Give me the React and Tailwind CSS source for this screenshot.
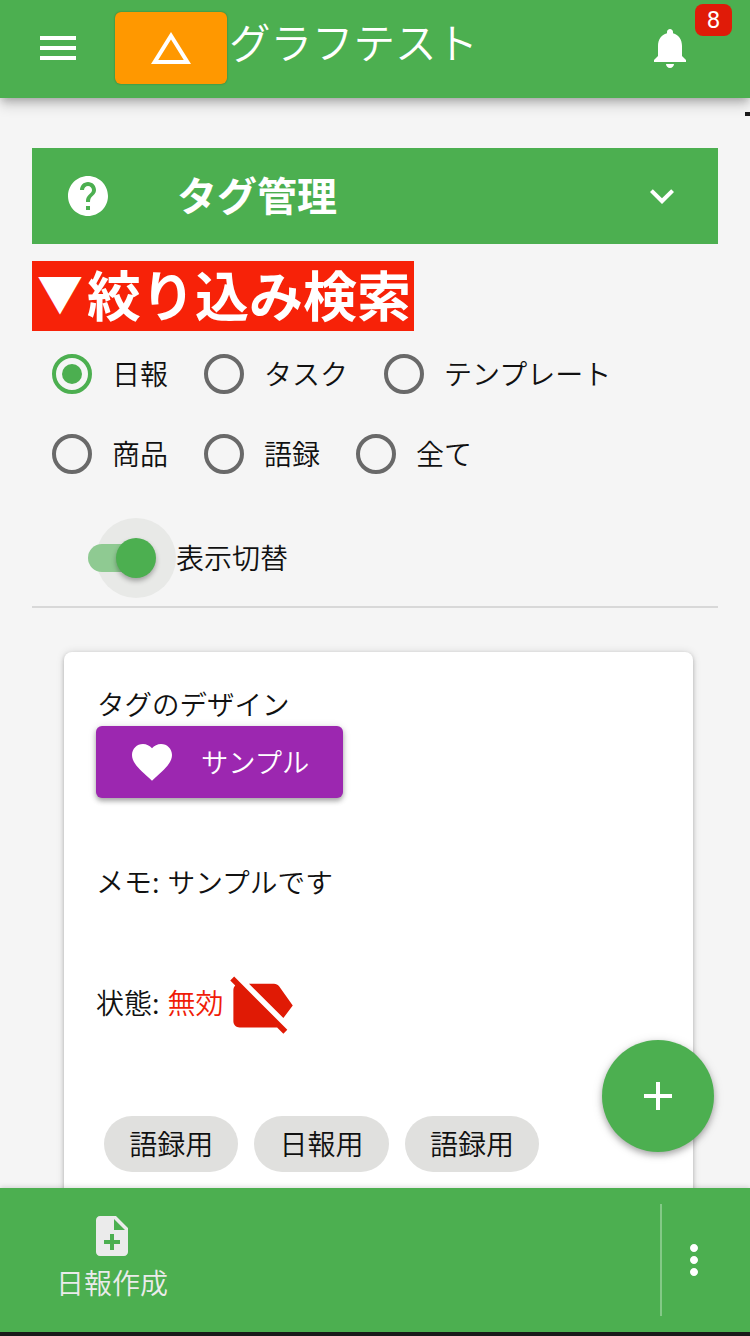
import React from "react";

const PATHS = {
  menu: "M3 18h18v-2H3v2zm0-5h18v-2H3v2zm0-7v2h18V6H3z",
  triangle: "M12 7.77L18.39 18H5.61L12 7.77M12 4L2 20h20L12 4z",
  bell: "M12 22c1.1 0 2-.9 2-2h-4c0 1.1.89 2 2 2zm6-6v-5c0-3.07-1.64-5.64-4.5-6.32V4c0-.83-.67-1.5-1.5-1.5s-1.5.67-1.5 1.5v.68C7.63 5.36 6 7.92 6 11v5l-2 2v1h16v-1l-2-2z",
  help: "M12 2C6.48 2 2 6.48 2 12s4.48 10 10 10 10-4.48 10-10S17.52 2 12 2zm1 17h-2v-2h2v2zm2.07-7.75l-.9.92C13.45 12.9 13 13.5 13 15h-2v-.5c0-1.1.45-2.1 1.17-2.83l1.24-1.26c.37-.36.59-.86.59-1.41 0-1.1-.9-2-2-2s-2 .9-2 2H8c0-2.21 1.79-4 4-4s4 1.79 4 4c0 .88-.36 1.68-.93 2.25z",
  expand: "M16.59 8.59L12 13.17 7.41 8.59 6 10l6 6 6-6z",
  heart: "M12 21.35l-1.45-1.32C5.4 15.36 2 12.28 2 8.5 2 5.42 4.42 3 7.5 3c1.74 0 3.41.81 4.5 2.09C13.09 3.81 14.76 3 16.5 3 19.58 3 22 5.42 22 8.5c0 3.78-3.4 6.86-8.55 11.54L12 21.35z",
  labelOff: "M3.25 2.75l17 17L19 21l-2-2H5c-1.1 0-2-.9-2-2V7c0-.55.23-1.05.59-1.41L2 4l1.25-1.25zM22 12l-4.37-6.16C17.27 5.33 16.67 5 16 5H8l11 11 3-4z",
  add: "M19 13h-6v6h-2v-6H5v-2h6V5h2v6h6v2z",
  noteAdd: "M14 2H6c-1.1 0-1.99.9-1.99 2L4 20c0 1.1.89 2 1.99 2H18c1.1 0 2-.9 2-2V8l-6-6zm2 14h-3v3h-2v-3H8v-2h3v-3h2v3h3v2zm-3-7V3.5L18.5 9H13z",
  more: "M12 8c1.1 0 2-.9 2-2s-.9-2-2-2-2 .9-2 2 .9 2 2 2zm0 2c-1.1 0-2 .9-2 2s.9 2 2 2 2-.9 2-2-.9-2-2-2zm0 6c-1.1 0-2 .9-2 2s.9 2 2 2 2-.9 2-2-.9-2-2-2z",
};

function Icon({ name, className = "size-12" }) {
  return (
    <svg viewBox="0 0 24 24" fill="currentColor" aria-hidden="true" className={`shrink-0 ${className}`}>
      <path d={PATHS[name]} />
    </svg>
  );
}

function Radio({ label, checked }) {
  return (
    <label className="flex h-10 items-center gap-5">
      <span
        className={`flex size-10 shrink-0 items-center justify-center rounded-full border-4 ${
          checked ? "border-[#4caf50]" : "border-[#696969]"
        }`}
      >
        {checked && <span className="size-5 rounded-full bg-[#4caf50]" />}
      </span>
      <span className="pb-[3px] leading-10">{label}</span>
    </label>
  );
}

function Header() {
  return (
    <header className="relative z-10 flex h-[98px] shrink-0 items-start bg-[#4caf50] text-white shadow-[0_4px_8px_-2px_rgba(0,0,0,0.25),0_8px_12px_rgba(0,0,0,0.14)]">
      <button className="mt-6 ml-[33.5px]">
        <Icon name="menu" />
      </button>
      <button className="mt-3 ml-[33.5px] flex h-[72px] w-28 items-center justify-center rounded-md bg-[#ff9800] shadow-[0_0_2px_rgba(0,0,0,0.35)]">
        <Icon name="triangle" />
      </button>
      <h1 className="mt-[11px] ml-[2px] text-[41.5px] leading-[60px] font-[350]">グラフテスト</h1>
      <button className="relative mt-6 mr-14 ml-auto">
        <Icon name="bell" />
        <span className="absolute -top-5 left-[49px] flex h-8 w-[37px] items-center justify-center rounded-lg bg-[#e01b08] font-['Roboto',sans-serif] text-[24px] leading-8 font-normal">
          8
        </span>
      </button>
    </header>
  );
}

function Filters() {
  return (
    <section className="border-b-2 border-[#d8d8d8] pb-2">
      <h2 className="mt-[17px] flex h-[70px] w-[382px] items-center bg-[#f72208] pb-[4px] pl-px text-[54px] leading-[66px] font-bold whitespace-nowrap text-white">
        <span className="w-[54px] pb-[6px] pl-1 text-[46px] leading-[60px]">▼</span>
        絞り込み検索
      </h2>
      <div className="mt-[23px] ml-5 flex flex-col gap-10">
        <div className="flex gap-9">
          <Radio label="日報" checked />
          <Radio label="タスク" />
          <Radio label="テンプレート" />
        </div>
        <div className="flex gap-9">
          <Radio label="商品" />
          <Radio label="語録" />
          <Radio label="全て" />
        </div>
      </div>
      <div className="mt-11 ml-14 flex h-20 items-center">
        <span className="relative flex h-20 w-[88px] items-center">
          <span className="absolute top-0 left-2 size-20 rounded-full bg-[#e8e9e7]" />
          <span className="relative h-7 w-14 rounded-full bg-[#8fca92]" />
          <span className="absolute top-5 left-7 size-10 rounded-full bg-[#4caf50] shadow-[0_3px_5px_rgba(0,0,0,0.3)]" />
        </span>
        <span className="pb-[3px]">表示切替</span>
      </div>
    </section>
  );
}

function TagCard() {
  return (
    <article className="mt-11 mr-[25px] ml-8 h-[640px] shrink-0 rounded-lg bg-white px-8 pt-8 shadow-[0_2px_4px_rgba(0,0,0,0.22),0_0_8px_rgba(0,0,0,0.12)]">
      <p className="h-[42px] pl-px text-[27.5px] leading-[38px]">タグのデザイン</p>
      <button className="flex h-[72px] w-[247px] items-center rounded-md bg-[#9c27b0] pl-8 text-white shadow-[0_3px_5px_rgba(0,0,0,0.3),0_1px_8px_rgba(0,0,0,0.12)]">
        <Icon name="heart" />
        <span className="ml-[25px] pb-[2px] text-[27.3px] font-[350]">サンプル</span>
      </button>
      <p className="mt-[63px] h-[41px] leading-10">
        メモ:<span className="ml-2 text-[27.7px]">サンプルです</span>
      </p>
      <p className="mt-[66px] flex h-[75px] items-center">
        <span className="pb-[8px]">状態:</span>
        <span className="ml-2 pb-[8px] text-[#f01c08]">無効</span>
        <Icon name="labelOff" className="size-[75px] text-[#e01a05]" />
      </p>
      <div className="mt-[73px] ml-2 flex gap-4">
        {["語録用", "日報用", "語録用"].map((tag, i) => (
          <span key={i} className="flex h-14 w-[134.4px] items-center justify-center rounded-full bg-[#e0e0de] pb-[2px]">
            {tag}
          </span>
        ))}
      </div>
    </article>
  );
}

function Footer() {
  return (
    <footer className="relative z-10 flex h-36 shrink-0 items-center bg-[#4caf50] text-white shadow-[0_-1px_5px_rgba(0,0,0,0.15)]">
      <button className="ml-14 flex h-full flex-col items-center pt-6 text-[#ebebeb]">
        <Icon name="noteAdd" />
        <span className="mt-[2px] leading-10 font-[350]">日報作成</span>
      </button>
      <div className="ml-auto flex h-28 w-[90px] items-center border-l-2 border-[#84c987] pl-2">
        <Icon name="more" />
      </div>
    </footer>
  );
}

export default function App() {
  return (
    <div
      lang="ja"
      className="relative flex h-[1336px] w-[750px] flex-col overflow-hidden bg-[#f5f5f5] font-['Noto_Sans_CJK_JP',sans-serif] text-[28px] font-[350] text-[#111111]"
    >
      <Header />
      <main className="flex min-h-0 flex-1 flex-col overflow-hidden px-8 pt-[50px]">
        <div className="flex h-24 shrink-0 items-center bg-[#4caf50] px-8 text-white">
          <Icon name="help" />
          <h2 className="ml-[65px] pb-1 text-[40px] font-bold">タグ管理</h2>
          <Icon name="expand" className="ml-auto size-12" />
        </div>
        <Filters />
        <TagCard />
      </main>
      <Footer />
      <div className="h-1 shrink-0 bg-[#1b1b1b]" />
      <span className="absolute top-28 right-0 h-1 w-[5px] bg-[#1b1b1b]" />
      <button className="absolute top-[1040px] right-9 z-20 flex size-28 items-center justify-center rounded-full bg-[#4caf50] text-white shadow-[0_3px_6px_rgba(0,0,0,0.28),0_2px_12px_rgba(0,0,0,0.12)]">
        <Icon name="add" />
      </button>
    </div>
  );
}
